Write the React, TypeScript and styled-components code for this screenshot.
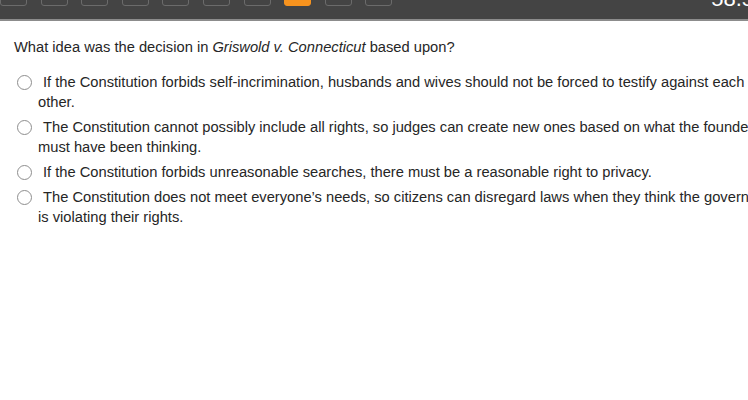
import styled, { createGlobalStyle } from "styled-components";

const GlobalStyle = createGlobalStyle`
  html, body {
    margin: 0;
    padding: 0;
    background: #ffffff;
  }
  body {
    font-family: "Liberation Sans", Arial, sans-serif;
    overflow: hidden;
  }
`;

const TopBar = styled.div`
  display: flex;
  align-items: flex-start;
  height: 19px;
  background: #444444;
  border-bottom: 2px solid #8c8c8c;
  overflow: hidden;
`;

const Steps = styled.div`
  display: flex;
  gap: 13.6px;
  height: 6px;
  align-items: flex-end;
`;

const Step = styled.div<{ $current?: boolean }>`
  width: 27px;
  height: 18px;
  margin-top: -12px;
  box-sizing: border-box;
  border-radius: 3px;
  border: 1px solid ${(p) => (p.$current ? "#f7931e" : "#6b6b6b")};
  background: ${(p) => (p.$current ? "#f7931e" : "#444444")};
`;

const Timer = styled.div`
  margin-left: auto;
  margin-right: -6px;
  margin-top: -12px;
  font-size: 22px;
  line-height: 22px;
  color: #ffffff;
  white-space: nowrap;
`;

/* the question panel is wider than the window, so long lines run off the right edge */
const Content = styled.div`
  width: 771px;
  padding: 16px 0 0 14px;
  color: #262626;
  font-size: 14.7px;
  line-height: 20px;
`;

const Question = styled.p`
  margin: 0 0 15px 0;
`;

const Options = styled.div`
  display: flex;
  flex-direction: column;
  gap: 5px;
`;

const Option = styled.label`
  display: block;
  padding-left: 24px;
  text-indent: -21px;
  cursor: pointer;
`;

const Radio = styled.span`
  display: inline-block;
  width: 15px;
  height: 15px;
  box-sizing: border-box;
  border: 1px solid #8e8e8e;
  border-radius: 50%;
  background: #ffffff;
  vertical-align: -3px;
  margin-right: 11px;
  text-indent: 0;
`;

const options = [
  "If the Constitution forbids self-incrimination, husbands and wives should not be forced to testify against each other.",
  "The Constitution cannot possibly include all rights, so judges can create new ones based on what the founders must have been thinking.",
  "If the Constitution forbids unreasonable searches, there must be a reasonable right to privacy.",
  "The Constitution does not meet everyone\u2019s needs, so citizens can disregard laws when they think the government is violating their rights.",
];

export default function App() {
  return (
    <>
      <GlobalStyle />
      <TopBar>
        <Steps>
          {Array.from({ length: 10 }).map((_, i) => (
            <Step key={i} $current={i === 7} />
          ))}
        </Steps>
        <Timer>58.5</Timer>
      </TopBar>
      <Content>
        <Question>
          What idea was the decision in <i>Griswold v. Connecticut</i> based upon?
        </Question>
        <Options>
          {options.map((o) => (
            <Option key={o}>
              <Radio />
              {o}
            </Option>
          ))}
        </Options>
      </Content>
    </>
  );
}
